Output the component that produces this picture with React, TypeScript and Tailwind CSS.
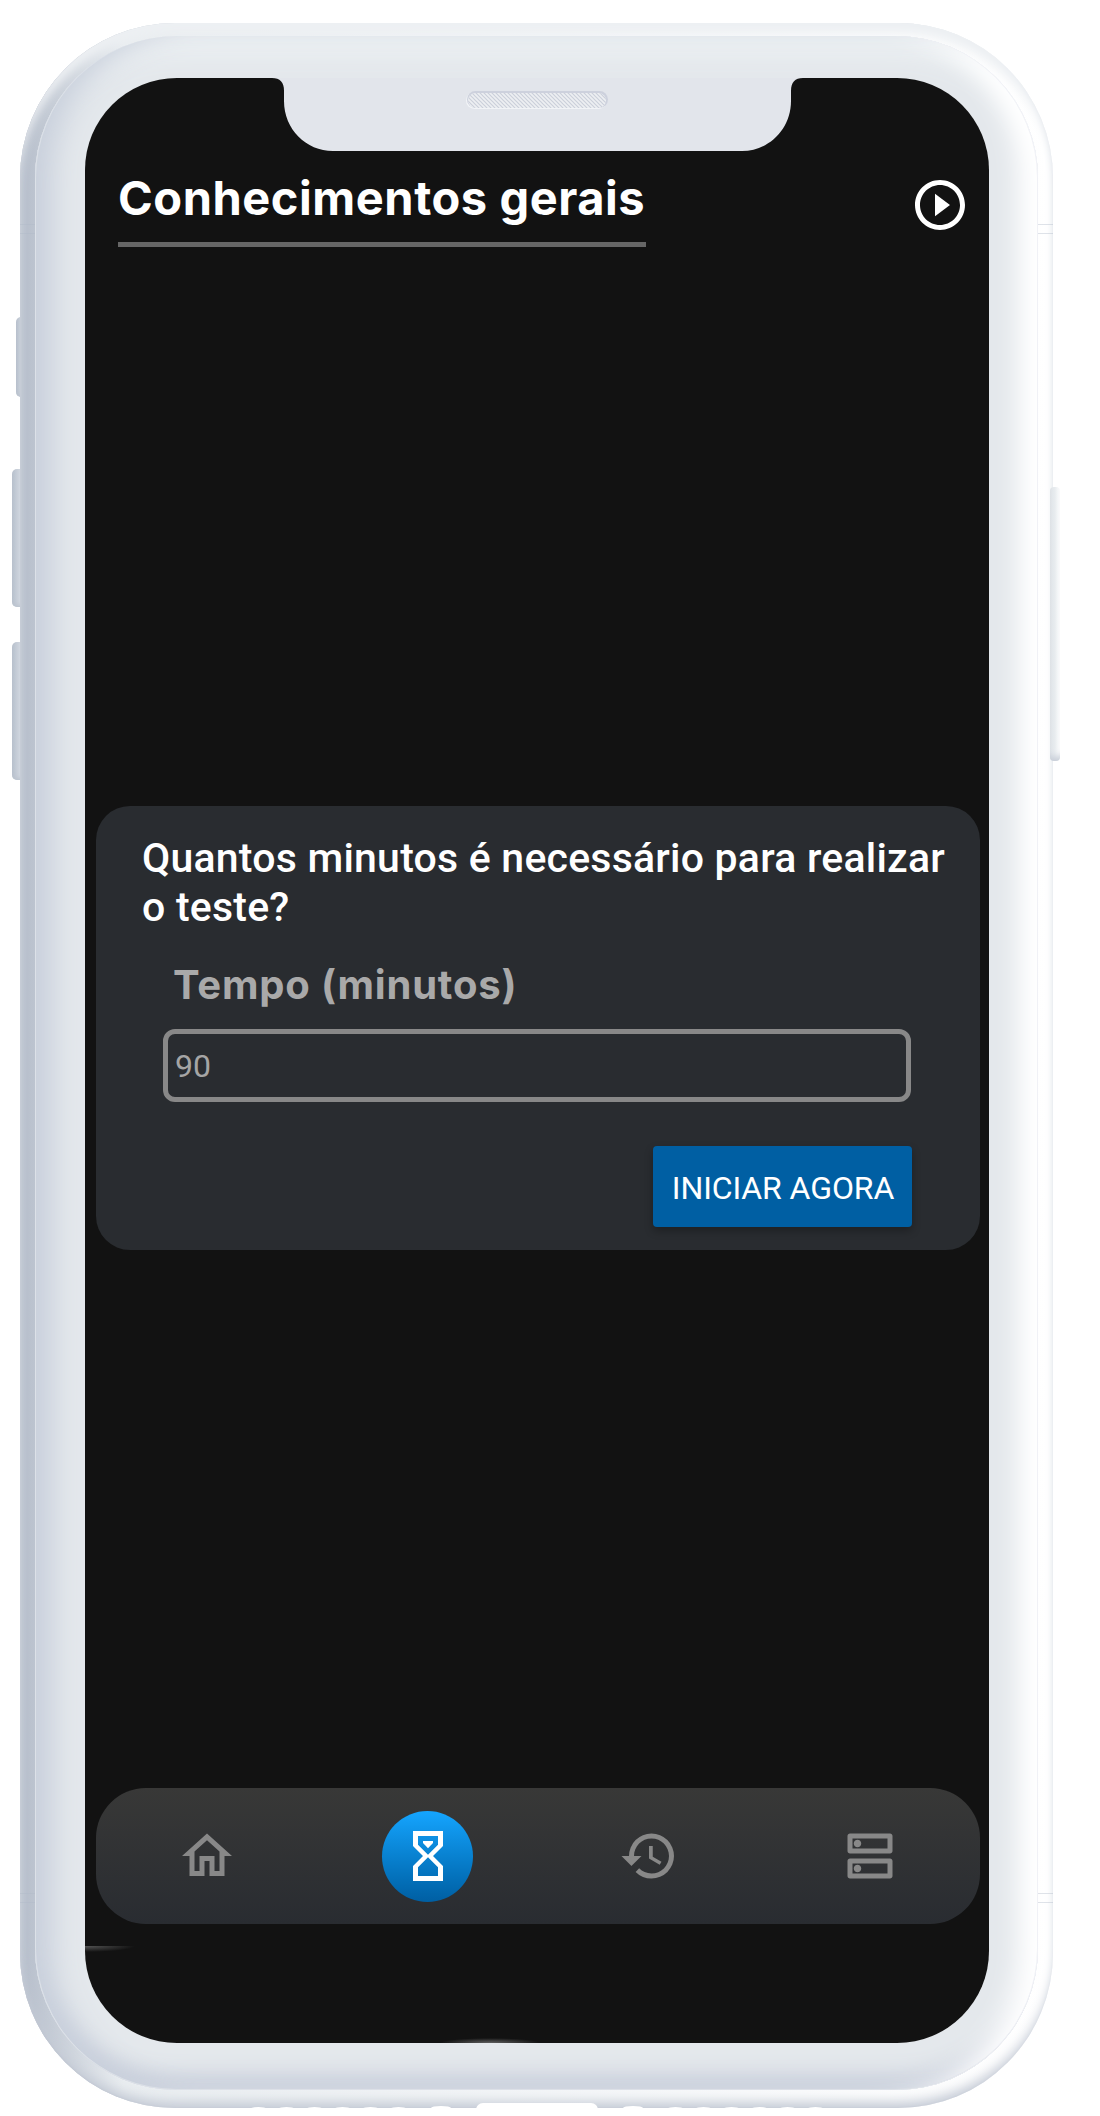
import { MdHistory, MdOutlineDns, MdOutlineHome, MdPlayCircleOutline } from "react-icons/md";

function HourglassIcon() {
  return (
    <svg viewBox="0 0 24 24" className="size-[60px] fill-white" fillRule="evenodd">
      <path d="M6 2h12v6l-4 4 4 4v6H6v-6l4-4-4-4zM8 4v3.5l4 4 4-4V4zM12 12.5l-4 4V20h8v-3.5z" />
      <path d="M10 6h4v.8l-2 2.1-2-2.1z" />
    </svg>
  );
}

function Notch() {
  return (
    <div className="flex h-[73px] justify-center">
      <svg viewBox="0 0 531 74" className="-mt-px h-[74px] w-[531px]">
        <defs>
          <pattern id="mesh" width="4" height="4" patternUnits="userSpaceOnUse">
            <path d="M0 0L4 4M-1 3L1 5M3 -1L5 1" stroke="#cbd0da" strokeWidth="1.2" />
          </pattern>
        </defs>
        <path
          d="M0 0H531V1C523 1 519 5 519 14V24C519 52 497 74 470 74H61C34 74 12 52 12 24V14C12 5 8 1 0 1Z"
          fill="#e2e5eb"
        />
        <rect x="194" y="15" width="141" height="17" rx="8.5" fill="#f2f4f7" />
        <rect x="195" y="14" width="141" height="17" rx="8.5" fill="#cdd1dd" />
        <rect x="196" y="16" width="138" height="15" rx="7.5" fill="#edeff2" />
        <rect x="196" y="16" width="138" height="15" rx="7.5" fill="url(#mesh)" />
      </svg>
    </div>
  );
}

function SideButton({ className }: { className: string }) {
  return (
    <div
      className={
        "rounded-[5px] bg-linear-to-r from-[#b7c0cc] via-[#d0d6df] to-[#dde1e7] shadow-[inset_0_-4px_4px_-2px_#bcc4cf] " +
        className
      }
    />
  );
}

function GrilleDots() {
  return (
    <div className="flex gap-[13px]">
      {[0, 1, 2, 3, 4, 5].map((n) => (
        <div key={n} className="h-[3px] w-[15px] rounded-[50%] bg-white" />
      ))}
    </div>
  );
}

function Seams() {
  return (
    <div className="flex w-[15px] shrink-0 flex-col gap-[1659px] pt-[201px]">
      <div className="h-[10px] border-y border-[#b0b8c8]/40" />
      <div className="h-[10px] border-y border-[#b0b8c8]/40" />
    </div>
  );
}

function Header() {
  return (
    <header className="flex items-start justify-between pt-[24px] pr-[19px] pl-[33px]">
      <h1 className="h-[72px] w-[528px] border-b-[5px] border-[#666] font-[Inter] text-[47px]/[46px] font-bold tracking-[0.55px] whitespace-nowrap text-white">
        Conhecimentos gerais
      </h1>
      <button aria-label="Iniciar">
        <MdPlayCircleOutline className="size-[60px] text-white" />
      </button>
    </header>
  );
}

function TestCard() {
  return (
    <section className="flex h-[444px] flex-col rounded-[34px] bg-[#292c30] pr-[69px] pl-[67px] font-[Roboto]">
      <h2 className="-mr-[60px] -ml-[21px] pt-[28px] text-[41px]/[49px] font-medium tracking-[0.22px] text-white">
        Quantos minutos é necessário para realizar
        <br />o teste?
      </h2>
      <label className="mt-[28px] pl-[10px] font-[Inter] text-[40px]/[50px] font-bold tracking-[0.8px] whitespace-nowrap text-[#a9a9a9]">
        Tempo (minutos)
      </label>
      <div className="mt-[19px] flex h-[73px] shrink-0 items-center rounded-[12px] border-[5px] border-[#888] pl-[7px] text-[32px] text-[#a5a5a5]">
        90
      </div>
      <button className="mt-[44px] -mr-px flex h-[81px] w-[259px] shrink-0 items-center justify-center self-end rounded-[4px] bg-[#005fa3] pt-[3px] pl-px text-[32px] tracking-[-0.1px] whitespace-nowrap text-white shadow-[0_4px_8px_rgba(0,0,0,0.28)]">
        INICIAR AGORA
      </button>
    </section>
  );
}

function BottomNav() {
  return (
    <nav className="grid h-[136px] grid-cols-4 place-items-center rounded-[50px] bg-linear-to-b from-[#383837] to-[#292c31] text-[#888]">
      <MdOutlineHome className="size-[60px]" />
      <div className="flex size-[91px] items-center justify-center rounded-full bg-linear-to-b from-[#15a5ff] to-[#005fa3]">
        <HourglassIcon />
      </div>
      <MdHistory className="size-[60px]" />
      <MdOutlineDns className="size-[60px]" />
    </nav>
  );
}

export default function App() {
  return (
    <div className="flex h-[2116px] w-[1100px] items-start overflow-hidden bg-white pt-[23px] pl-[12px]">
      <div className="flex w-[8px] shrink-0 flex-col pt-[294px]">
        <SideButton className="ml-[4px] h-[80px] w-[12px]" />
        <SideButton className="mt-[72px] h-[138px] w-[16px]" />
        <SideButton className="mt-[35px] h-[138px] w-[16px]" />
      </div>

      <div className="relative flex h-[2085px] w-[1033px] shrink-0 flex-col justify-between overflow-hidden rounded-[155px] bg-linear-to-r from-[#b5bdca] via-[#e9edf0] via-10% to-white shadow-[inset_0_-10px_12px_-4px_#c5cbd6,inset_0_12px_10px_-2px_#edf0f3,inset_1px_0_2px_#b5bcc9,inset_-12px_0_8px_-4px_#ffffff]">
        <div className="flex h-[2067px]">
          <Seams />
          <div className="mt-[13px] h-[2054px] w-[1003px] shrink-0 rounded-[142px] bg-[#e4e8ec] pt-[42px] pl-[50px] shadow-[inset_1px_0_0_#dce1e8,inset_-1px_0_0_#f0f1f6,inset_0_-1px_0_#dce0e7,inset_26px_0_28px_-8px_#c9d0dc,inset_-32px_0_24px_-12px_#ffffff,inset_0_-24px_20px_-8px_#cad0dc,inset_0_26px_22px_-8px_#eef2f4]">
            <main className="h-[1965px] w-[904px] overflow-hidden rounded-[92px] bg-[#121212]">
              <Notch />
              <Header />
              <div className="flex flex-col gap-[538px] pt-[559px] pr-[9px] pl-[11px]">
                <TestCard />
                <BottomNav />
              </div>
              <div className="mt-[22px] h-[97px] bg-[radial-gradient(50px_6px_at_0_0,#777777aa,transparent),radial-gradient(50px_5px_at_405px_100%,#888888aa,transparent)]" />
            </main>
          </div>
          <Seams />
        </div>
        <div className="-mb-[2px] flex h-[6px] items-end justify-center gap-[25px]">
          <GrilleDots />
          <div className="h-[4px] w-[20px] rounded-[50%] bg-white" />
          <div className="h-[7px] w-[122px] rounded-t-[14px] bg-white" />
          <div className="h-[4px] w-[20px] rounded-[50%] bg-white" />
          <GrilleDots />
        </div>
      </div>

      <div className="relative -ml-[3px] pt-[464px]">
        <div className="h-[274px] w-[10px] rounded-[4px] bg-linear-to-r from-[#e0e4e8] via-[#e8ecef] to-white shadow-[inset_0_-8px_6px_-4px_#c9cfd9]" />
      </div>
    </div>
  );
}
